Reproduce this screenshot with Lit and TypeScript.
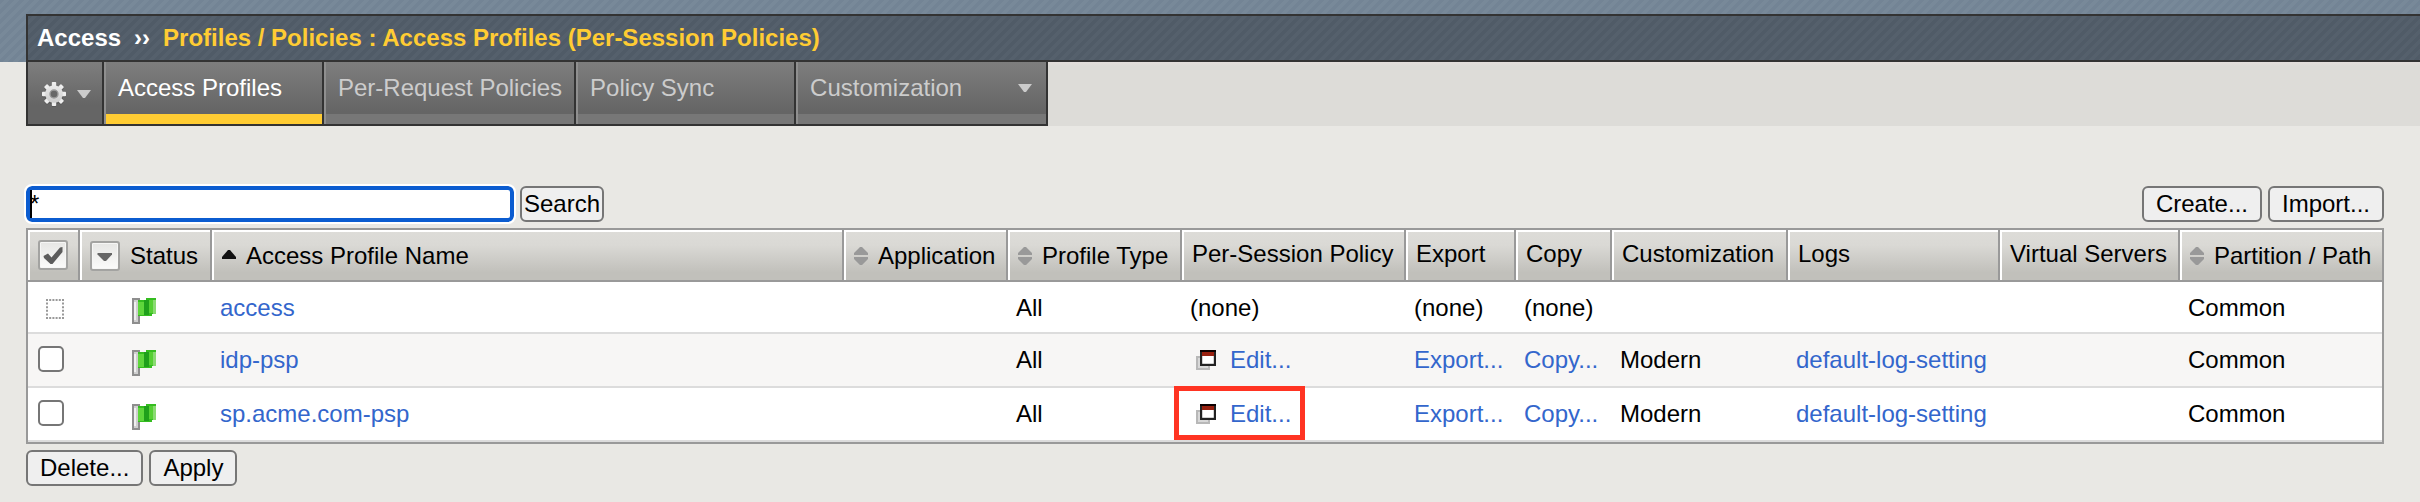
import { LitElement, html, css, svg, nothing } from "lit";
import { customElement, property, state } from "lit/decorators.js";
import { classMap } from "lit/directives/class-map.js";

interface Profile {
  name: string;
  editable: boolean;
  customization: string;
  logs: string;
  highlighted?: boolean;
}

const PROFILES: Profile[] = [
  { name: "access", editable: false, customization: "", logs: "" },
  { name: "idp-psp", editable: true, customization: "Modern", logs: "default-log-setting" },
  { name: "sp.acme.com-psp", editable: true, customization: "Modern", logs: "default-log-setting", highlighted: true },
];

const gearTeeth = [0, 45, 90, 135, 180, 225, 270, 315].map(
  (a) => svg`<rect x="10.8" y="1" width="4.4" height="6" rx="0.8" transform="rotate(${a} 13 13)"></rect>`
);

const gearIcon = html`
  <svg width="26" height="26" viewBox="0 0 26 26" aria-hidden="true">
    <defs>
      <linearGradient id="steel" x1="0" y1="0" x2="0" y2="26" gradientUnits="userSpaceOnUse">
        <stop offset="0" stop-color="#f2f2f2"></stop>
        <stop offset="1" stop-color="#c4c4c4"></stop>
      </linearGradient>
    </defs>
    <g transform="translate(0 1)" fill="#4c4c4c" opacity="0.5">${gearTeeth}<circle cx="13" cy="13" r="9.6"></circle></g>
    <g fill="url(#steel)">${gearTeeth}<circle cx="13" cy="13" r="8.8"></circle></g>
    <circle cx="13" cy="13" r="4" fill="#686868" stroke="#9a9a9a" stroke-width="1.4"></circle>
  </svg>`;

const downArrow = html`
  <svg width="14" height="8" viewBox="0 0 14 8" aria-hidden="true">
    <path d="M0 0H14L8 8H6Z" fill="#cbcbcb"></path>
  </svg>`;

const sortBoth = html`
  <svg width="14" height="18" viewBox="0 0 14 18" aria-hidden="true">
    <path d="M6 0H8L14 6V8H0V6ZM0 10H14V12L8 18H6L0 12Z" fill="#999"></path>
  </svg>`;

const sortUp = html`
  <svg width="14" height="12" viewBox="0 0 14 12" aria-hidden="true">
    <path d="M6 0H8L14 7V9H0V7Z" fill="#111"></path>
  </svg>`;

const checkGlyph = html`
  <svg width="26" height="26" viewBox="0 0 26 26" aria-hidden="true">
    <path d="M3.5 14L8 11.5L11.5 15.5L20 5.5L22.5 5V10L12.5 22H10.5L4 16Z" fill="#5c5c5c"></path>
  </svg>`;

const menuGlyph = html`
  <svg width="26" height="26" viewBox="0 0 26 26" aria-hidden="true">
    <path d="M5.5 10H20V11.5L14 18H12L5.5 11.5Z" fill="#666"></path>
  </svg>`;

const flagIcon = html`
  <svg width="24" height="26" viewBox="0 0 24 26" role="img" aria-label="Enabled">
    <rect x="0" y="0" width="8" height="26" fill="#8e8e8e"></rect>
    <rect x="2" y="2" width="4" height="22" fill="#cfcfcf"></rect>
    <rect x="2" y="4" width="2" height="18" fill="#f0f0f0"></rect>
    <path d="M6 2H14V0H24V16H20V18H6Z" fill="#35bd20"></path>
    <path d="M6 4H12V17H6Z" fill="#5fd63c"></path>
    <path d="M12 2H17V17H12Z" fill="#1fa01b"></path>
    <path d="M17 2H22V15H17Z" fill="#55cf33"></path>
    <path d="M21 2H24V16H21Z" fill="#8ada72"></path>
  </svg>`;

const windowIcon = html`
  <svg width="20" height="20" viewBox="0 0 20 20" aria-hidden="true">
    <rect x="1" y="7" width="12" height="12" fill="#d8d8d8" stroke="#b8b8b8" stroke-width="2"></rect>
    <rect x="5.1" y="1.1" width="13.8" height="13.8" fill="#fff" stroke="#222" stroke-width="2.2"></rect>
    <rect x="4" y="0" width="16" height="2" fill="#0c0000"></rect>
    <rect x="6" y="2" width="12" height="4" fill="#98200f"></rect>
  </svg>`;

@customElement("f5-banner")
class F5Banner extends LitElement {
  static styles = css`
    :host { display: block; }
    .strip {
      padding: 14px 0 0 26px;
      background: linear-gradient(135deg, #738495 25%, #788999 25% 50%, #738495 50% 75%, #788999 75%) 0 0 / 10px 10px;
    }
    .crumbs {
      display: flex;
      gap: 13px;
      padding: 8px 9px;
      border: 2px solid #333;
      border-right: 0;
      background: linear-gradient(135deg, #505b67 25%, #55606c 25% 50%, #505b67 50% 75%, #55606c 75%) 0 0 / 10px 10px;
      color: #fff;
      font-weight: bold;
      line-height: 28px;
    }
    .here { color: #ffcc33; }
    .tabs {
      display: flex;
      margin-left: 26px;
      background: linear-gradient(#e4dfdc, #dddcd8 4px);
    }
    .list {
      display: flex;
      margin: 0;
      padding: 0;
      list-style: none;
      border: solid #333;
      border-width: 0 0 2px 2px;
    }
    .gear {
      display: flex;
      align-items: center;
      gap: 10px;
      width: 76px;
      height: 100%;
      margin: 0;
      padding: 2px 0 0 13px;
      border: 0;
      border-right: 2px solid #333;
      background: linear-gradient(#7e7e7e, #656565 70%);
    }
    .tab {
      box-sizing: border-box;
      display: flex;
      justify-content: space-between;
      min-width: 220px;
      padding: 12px 12px 22px;
      border-left: 2px solid #8f8f8f;
      border-right: 2px solid #333;
      background: linear-gradient(#7e7e7e, #656565 80%);
      box-shadow: inset 0 -10px #777;
      color: #ccc;
      line-height: 28px;
      text-decoration: none;
      white-space: nowrap;
    }
    .menu { min-width: 252px; align-items: center; padding-right: 14px; }
    .current { color: #fff; box-shadow: inset 0 -10px #ffcc33; }
  `;

  render() {
    return html`
      <header class="strip">
        <div class="crumbs">
          <span>Access</span><span aria-hidden="true">››</span>
          <span class="here">Profiles / Policies : Access Profiles (Per-Session Policies)</span>
        </div>
      </header>
      <nav class="tabs">
        <ul class="list">
          <li><button class="gear" aria-label="Options">${gearIcon}${downArrow}</button></li>
          <li><a class="tab current" href="#profiles">Access Profiles</a></li>
          <li><a class="tab" href="#per-request">Per-Request Policies</a></li>
          <li><a class="tab" href="#sync">Policy Sync</a></li>
          <li><a class="tab menu" href="#customization">Customization ${downArrow}</a></li>
        </ul>
      </nav>`;
  }
}

@customElement("profile-table")
class ProfileTable extends LitElement {
  @property({ attribute: false }) profiles: Profile[] = [];

  static styles = css`
    :host { display: block; }
    .grid {
      width: 100%;
      table-layout: fixed;
      border-collapse: separate;
      border-spacing: 0;
      border: 2px solid #999;
      background: #fff;
      line-height: 28px;
      white-space: nowrap;
    }
    .c-check { width: 52px; }
    .c-status { width: 132px; }
    .c-app { width: 164px; }
    .c-type { width: 174px; }
    .c-policy { width: 224px; }
    .c-export { width: 110px; }
    .c-copy { width: 96px; }
    .c-custom { width: 176px; }
    .c-logs { width: 212px; }
    .c-servers { width: 180px; }
    .c-path { width: 202px; }
    th {
      height: 30px;
      padding: 10px 0 10px 10px;
      border-right: 2px solid #999;
      border-bottom: 2px solid #999;
      background: linear-gradient(#dddcd8, #dad9d5 30%, #c1c0bb 85%);
      box-shadow: inset 2px 2px #fff;
      font-weight: normal;
      text-align: left;
      vertical-align: top;
      line-height: 28px;
    }
    th:last-child { border-right: 0; }
    .plain { display: block; height: 30px; }
    .sort {
      box-sizing: border-box;
      display: flex;
      align-items: center;
      gap: 10px;
      height: 30px;
      padding-top: 2px;
    }
    .sort svg { flex: none; }
    .box {
      box-sizing: border-box;
      display: block;
      flex: none;
      width: 30px;
      height: 30px;
      padding: 0;
      border: 2px solid #a3a3a1;
      border-radius: 3px;
      background: linear-gradient(#e6e6e4, #fbfbfa);
      box-shadow: inset 0 0 0 1px #f6f6f5;
    }
    .box svg { display: block; }
    td {
      padding: 12px 0 10px 8px;
      border-bottom: 2px solid #dcdcdc;
      vertical-align: top;
    }
    .even td { background: #f7f6f5; }
    .pick { padding-left: 10px; }
    .tick {
      appearance: none;
      display: block;
      width: 26px;
      height: 26px;
      margin: 0 0 4px;
      border: 2px solid #767676;
      border-radius: 5px;
      background: #fff;
    }
    .tick:checked { background: #0b5cd0; }
    .locked { display: block; margin: 5px 0 0 8px; }
    .flag { padding: 16px 0 8px 52px; }
    .flag svg { display: block; }
    a { color: #3366cc; text-decoration: none; }
    .edit {
      position: relative;
      display: inline-flex;
      gap: 14px;
      padding-left: 6px;
      vertical-align: top;
    }
    .edit svg { margin-top: 4px; }
    .marked::after {
      content: "";
      position: absolute;
      inset: -14px -14px -12px -16px;
      border: 5px solid #ff3422;
    }
  `;

  private row(p: Profile, i: number) {
    return html`
      <tr class=${classMap({ even: i % 2 === 1 })}>
        <td class="pick">
          ${p.editable
            ? html`<input class="tick" type="checkbox" aria-label="Select ${p.name}" />`
            : html`<svg class="locked" width="18" height="20" viewBox="0 0 18 20" aria-hidden="true">
                <path d="M0 1H18M0 19H18" stroke="#999" stroke-width="2" stroke-dasharray="2 1.2"></path>
                <path d="M1 0V20M17 0V20" stroke="#999" stroke-width="2" stroke-dasharray="2 1.6"></path>
              </svg>`}
        </td>
        <td class="flag">${flagIcon}</td>
        <td><a href="#${p.name}">${p.name}</a></td>
        <td></td>
        <td>All</td>
        <td>
          ${p.editable
            ? html`<span class=${classMap({ edit: true, marked: !!p.highlighted })}>${windowIcon}<a href="#edit">Edit...</a></span>`
            : "(none)"}
        </td>
        <td>${p.editable ? html`<a href="#export">Export...</a>` : "(none)"}</td>
        <td>${p.editable ? html`<a href="#copy">Copy...</a>` : "(none)"}</td>
        <td>${p.customization}</td>
        <td>${p.logs ? html`<a href="#logs">${p.logs}</a>` : nothing}</td>
        <td></td>
        <td>Common</td>
      </tr>`;
  }

  render() {
    return html`
      <table class="grid">
        <colgroup>
          <col class="c-check" /><col class="c-status" /><col /><col class="c-app" />
          <col class="c-type" /><col class="c-policy" /><col class="c-export" /><col class="c-copy" />
          <col class="c-custom" /><col class="c-logs" /><col class="c-servers" /><col class="c-path" />
        </colgroup>
        <thead>
          <tr>
            <th><button class="box" aria-label="Select all">${checkGlyph}</button></th>
            <th><span class="sort"><button class="box" aria-label="Filter status">${menuGlyph}</button>Status</span></th>
            <th><span class="sort">${sortUp}Access Profile Name</span></th>
            <th><span class="sort">${sortBoth}Application</span></th>
            <th><span class="sort">${sortBoth}Profile Type</span></th>
            <th><span class="plain">Per-Session Policy</span></th>
            <th><span class="plain">Export</span></th>
            <th><span class="plain">Copy</span></th>
            <th><span class="plain">Customization</span></th>
            <th><span class="plain">Logs</span></th>
            <th><span class="plain">Virtual Servers</span></th>
            <th><span class="sort">${sortBoth}Partition / Path</span></th>
          </tr>
        </thead>
        <tbody>
          ${this.profiles.map((p, i) => this.row(p, i))}
        </tbody>
      </table>`;
  }
}

@customElement("app-root")
class AppRoot extends LitElement {
  @state() private query = "*";

  static styles = css`
    :host {
      display: block;
      min-height: 100vh;
      background: #e9e8e4;
      color: #000;
      font: 24px "Liberation Sans", Arial, sans-serif;
    }
    .content {
      display: grid;
      gap: 6px;
      padding: 60px 36px 16px 26px;
    }
    .bar { display: flex; gap: 6px; }
    .search { position: relative; width: 488px; }
    .query {
      box-sizing: border-box;
      display: block;
      width: 100%;
      height: 36px;
      padding: 0;
      border: 4px solid #0b5cd0;
      border-radius: 6px;
      outline: 2px solid #fff;
      background: #fff;
      color: #000;
      font: inherit;
    }
    .caret {
      position: absolute;
      left: 4px;
      top: 4px;
      width: 2px;
      height: 28px;
      background: #000;
    }
    .btn {
      margin: 0;
      padding: 2px 12px;
      border: 2px solid #767676;
      border-radius: 6px;
      background: #efefef;
      color: #000;
      font: inherit;
      line-height: 28px;
    }
    .tight { padding: 2px; }
    .push { margin-left: auto; }
  `;

  render() {
    return html`
      <f5-banner></f5-banner>
      <main class="content">
        <div class="bar">
          <div class="search">
            <input class="query" type="text" aria-label="Search profiles" .value=${this.query}
              @input=${(e: Event) => (this.query = (e.target as HTMLInputElement).value)} />
            <span class="caret"></span>
          </div>
          <button class="btn tight">Search</button>
          <button class="btn push">Create...</button>
          <button class="btn">Import...</button>
        </div>
        <profile-table .profiles=${PROFILES}></profile-table>
        <div class="bar">
          <button class="btn">Delete...</button>
          <button class="btn">Apply</button>
        </div>
      </main>`;
  }
}
